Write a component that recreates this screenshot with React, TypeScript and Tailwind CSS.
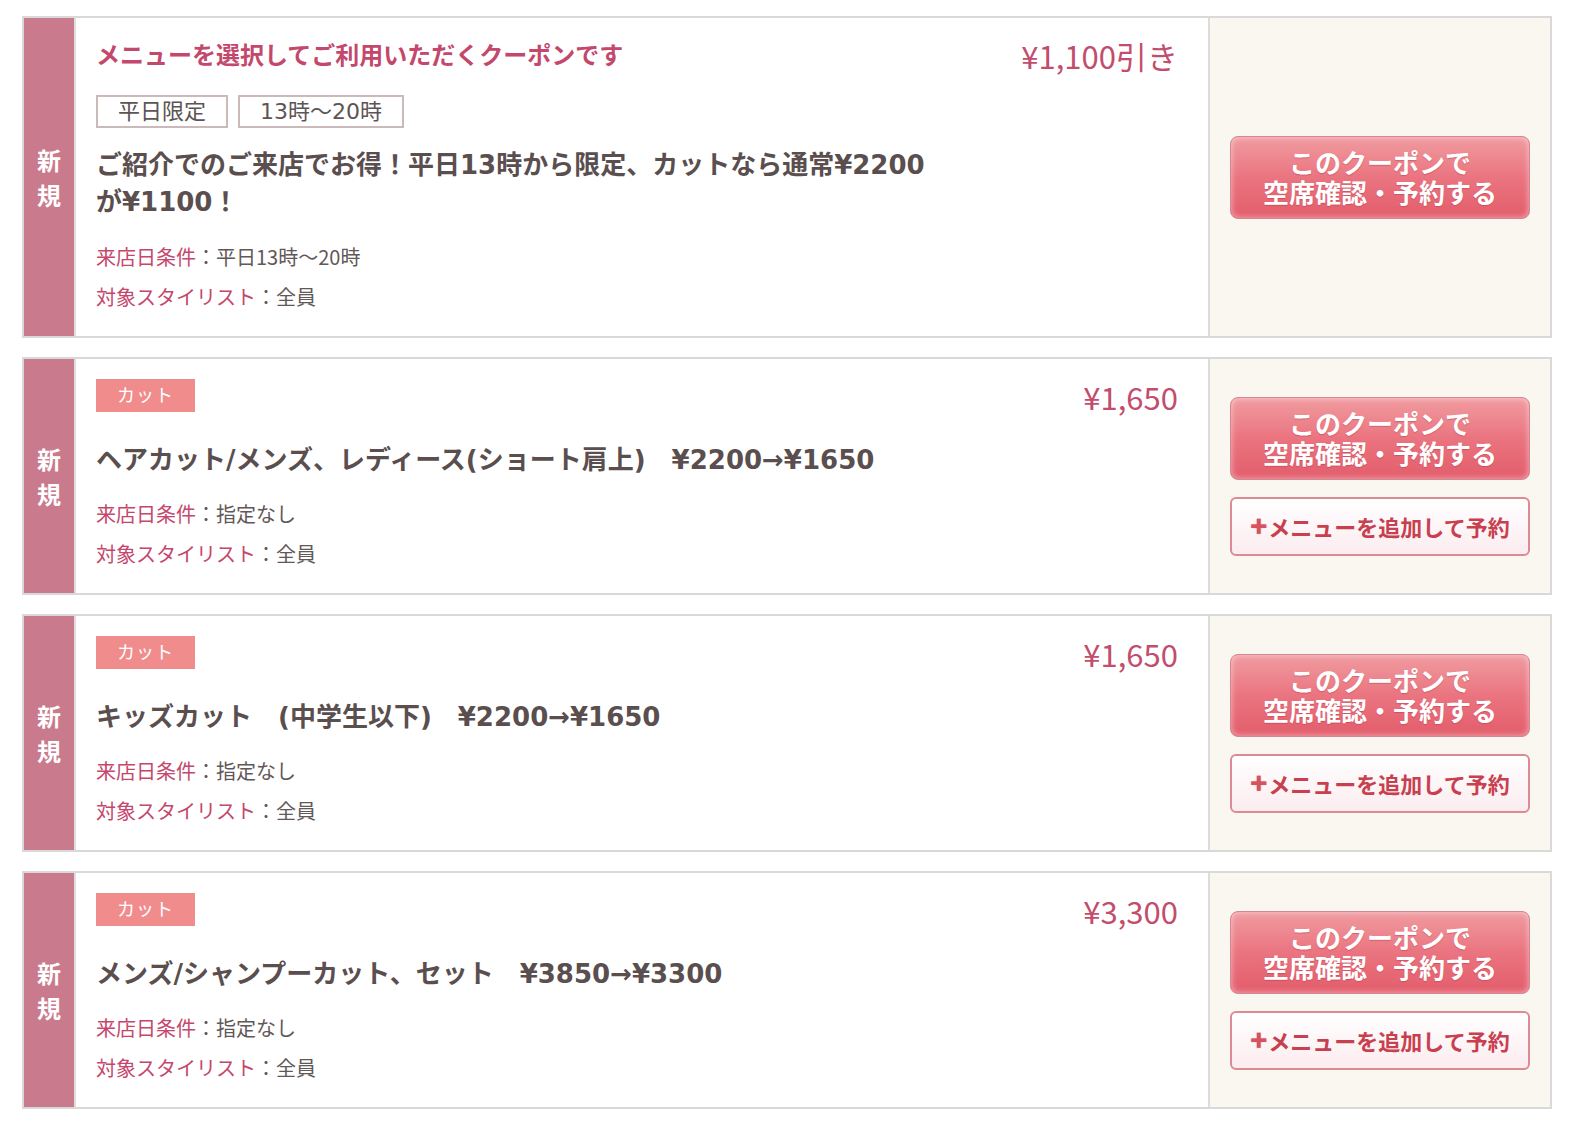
const coupons = [
  {
    lead: "メニューを選択してご利用いただくクーポンです",
    tags: ["平日限定", "13時〜20時"],
    category: null as string | null,
    title: "ご紹介でのご来店でお得！平日13時から限定、カットなら通常¥2200が¥1100！",
    price: "¥1,100引き",
    day: "平日13時〜20時",
    addMenu: false,
  },
  {
    lead: null as string | null,
    tags: [] as string[],
    category: "カット",
    title: "ヘアカット/メンズ、レディース(ショート肩上)　¥2200→¥1650",
    price: "¥1,650",
    day: "指定なし",
    addMenu: true,
  },
  {
    lead: null as string | null,
    tags: [] as string[],
    category: "カット",
    title: "キッズカット　(中学生以下)　¥2200→¥1650",
    price: "¥1,650",
    day: "指定なし",
    addMenu: true,
  },
  {
    lead: null as string | null,
    tags: [] as string[],
    category: "カット",
    title: "メンズ/シャンプーカット、セット　¥3850→¥3300",
    price: "¥3,300",
    day: "指定なし",
    addMenu: true,
  },
];

function CouponCard({ coupon }: { coupon: (typeof coupons)[number] }) {
  return (
    <div className="flex border-2 border-[#d9d9d9] mb-[19px]">
      {/* 新規 band */}
      <div className="w-[52px] shrink-0 bg-[#c97a8d] border-r-2 border-[#dedede] flex flex-col items-center justify-center text-white font-bold text-[24px] leading-[35px]">
        <span>新</span>
        <span>規</span>
      </div>

      {/* body */}
      <div className="flex-1 bg-white flex justify-between pl-5 pr-[30px] pt-5 pb-[19px]">
        <div className="flex flex-col items-start">
          {coupon.lead && (
            <p className="text-[24px] leading-[32px] font-bold text-[#c4476c]">{coupon.lead}</p>
          )}
          {coupon.tags.length > 0 && (
            <div className="flex gap-[10px] mt-[25px]">
              {coupon.tags.map((t) => (
                <span
                  key={t}
                  className="border-2 border-[#cbbaba] h-[33px] px-5 flex items-center text-[22px] text-[#5d5454] font-['DejaVu_Sans','Noto_Sans_CJK_JP',sans-serif]"
                >
                  {t}
                </span>
              ))}
            </div>
          )}
          {coupon.category && (
            <span className="bg-[#f08c8c] text-white h-[33px] px-[21px] flex items-center text-[18px] tracking-[1px] pb-[3px]">
              {coupon.category}
            </span>
          )}
          <p
            className={
              coupon.lead
                ? "mt-[19px] max-w-[842px] text-[26px] leading-[37px] font-bold text-[#5a4e4e] font-['DejaVu_Sans','Noto_Sans_CJK_JP',sans-serif]"
                : "mt-[30px] text-[26px] leading-[37px] font-bold text-[#5a4e4e] font-['DejaVu_Sans','Noto_Sans_CJK_JP',sans-serif]"
            }
          >
            {coupon.title}
          </p>
          <div className={coupon.lead ? "mt-[16px]" : "mt-[15px]"}>
            <p className="text-[20px] leading-[40px]">
              <span className="text-[#c4476c]">来店日条件</span>
              <span className="text-[#625858]">：{coupon.day}</span>
            </p>
            <p className="text-[20px] leading-[40px]">
              <span className="text-[#c4476c]">対象スタイリスト</span>
              <span className="text-[#625858]">：全員</span>
            </p>
          </div>
        </div>
        <p className="shrink-0 text-[31px] leading-[36px] text-[#c24d6c] whitespace-nowrap">
          {coupon.price}
        </p>
      </div>

      {/* actions */}
      <div className="w-[342px] shrink-0 bg-[#faf6f0] border-l-2 border-[#dcdcdc] flex flex-col items-center justify-center gap-[17px]">
        <button className="w-[300px] h-[83px] rounded-[8px] border border-[#d68690] bg-gradient-to-b from-[#f09ba0] via-[#ea7480] to-[#e35d6b] shadow-[inset_0_0_6px_rgba(255,255,255,0.55)] text-white font-bold text-[26px] leading-[30px] flex flex-col items-center justify-center [text-shadow:0_1px_1px_rgba(160,40,60,0.35)]">
          <span>このクーポンで</span>
          <span>空席確認・予約する</span>
        </button>
        {coupon.addMenu && (
          <button className="w-[300px] h-[59px] rounded-[6px] border-2 border-[#dc8a96] bg-gradient-to-b from-white to-[#fbecef] text-[#c8404f] font-bold text-[22px] flex items-center justify-center">
            <span className="text-[#d4535f] mr-[1px] font-black text-[28px] leading-none pb-[2px] [text-shadow:0_0_1px_rgba(212,83,95,0.8)]">+</span>
            メニューを追加して予約
          </button>
        )}
      </div>
    </div>
  );
}

export default function App() {
  return (
    <div className="min-h-screen bg-white pt-4 pl-[22px] pr-[26px] font-['Noto_Sans_CJK_JP','Noto_Sans',sans-serif]">
      {coupons.map((c, i) => (
        <CouponCard key={i} coupon={c} />
      ))}
    </div>
  );
}
